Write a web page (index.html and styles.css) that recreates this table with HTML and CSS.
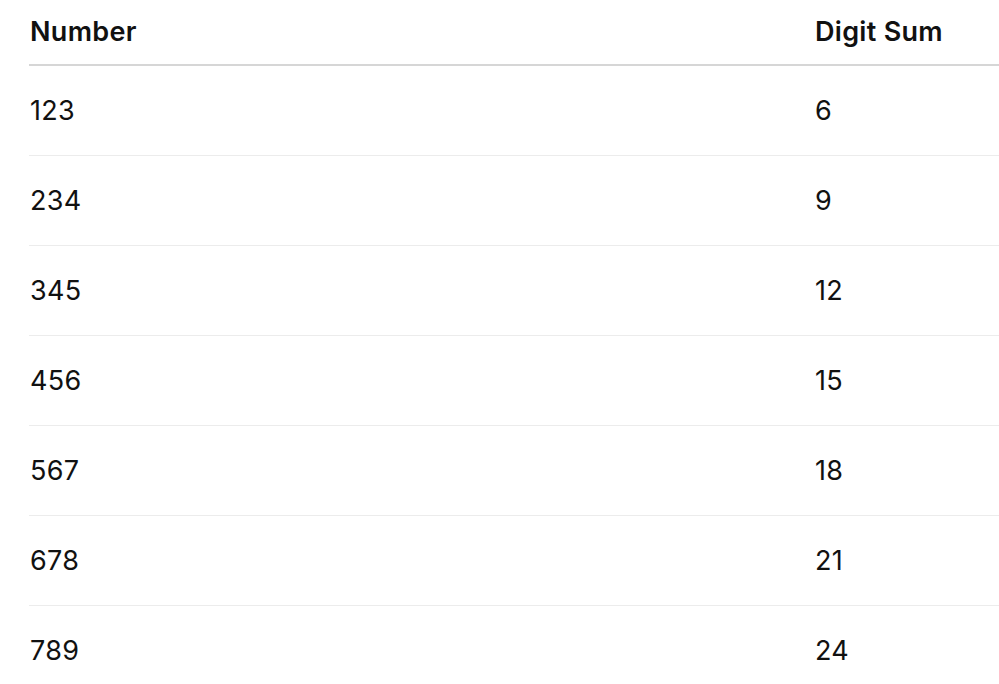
FILE: index.html
```html
<!DOCTYPE html>
<html lang="en">
<head>
<meta charset="utf-8">
<title>Digit Sums</title>
<link rel="stylesheet" href="styles.css">
</head>
<body>
<div class="wrap">
<table class="sums">
<thead>
<tr><th class="col-num">Number</th><th class="col-sum">Digit Sum</th></tr>
</thead>
<tbody>
<tr><td>123</td><td>6</td></tr>
<tr><td>234</td><td>9</td></tr>
<tr><td>345</td><td>12</td></tr>
<tr><td>456</td><td>15</td></tr>
<tr><td>567</td><td>18</td></tr>
<tr><td>678</td><td>21</td></tr>
<tr><td>789</td><td>24</td></tr>
</tbody>
</table>
</div>
</body>
</html>
```
FILE: styles.css
```css
html, body {
  margin: 0;
  padding: 0;
  background: #ffffff;
  overflow: hidden;
}
.wrap {
  padding-left: 29px;
}
.sums {
  border-collapse: collapse;
  width: 970px;
  table-layout: fixed;
  font-family: Inter, "Liberation Sans", sans-serif;
  font-size: 27px;
  letter-spacing: 0.3px;
  color: #111111;
}
.sums th {
  text-align: left;
  font-weight: 600;
  height: 64px;
  padding: 0 0 0 1px;
  vertical-align: middle;
  border-bottom: 2px solid #d6d6d6;
  line-height: 32px;
}
.sums .col-num {
  width: 784px;
}
.sums td {
  height: 89px;
  padding: 0 0 0 1px;
  vertical-align: middle;
  border-bottom: 1px solid #ececec;
  line-height: 32px;
  font-weight: 400;
}
```
